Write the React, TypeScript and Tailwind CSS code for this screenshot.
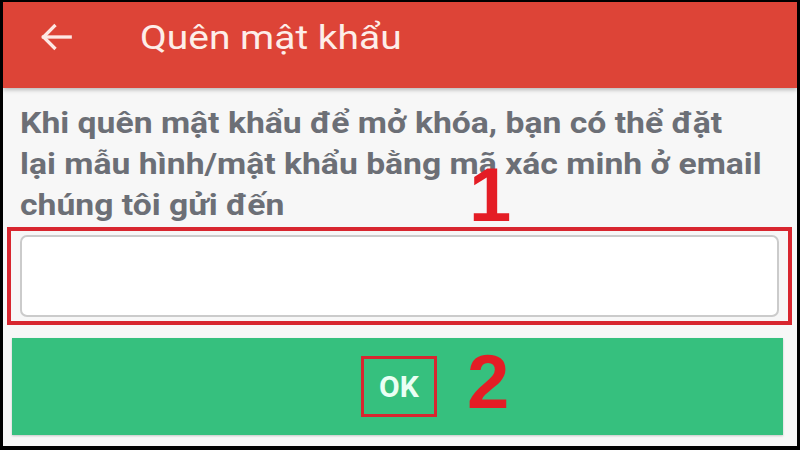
import React from "react";

const font = { fontFamily: "Roboto, 'Noto Sans', sans-serif" };

export default function App() {
  return (
    <div className="w-[800px] h-[450px] bg-black pt-[2px] pb-[4px] px-[3px]" style={font}>
      <div className="relative w-full h-full bg-[#f7f7f7] flex flex-col overflow-hidden">
        {/* header */}
        <div className="h-[86px] shrink-0 bg-[#dd4437] flex items-center pb-[16px] shadow-[0_2px_4px_rgba(0,0,0,0.25)] z-10">
          <svg className="ml-[33px] w-[40px] h-[40px]" viewBox="0 0 24 24" fill="none" stroke="#fde8e4" strokeWidth={2} strokeLinecap="square">
            <path d="M20.5 12H4.5" />
            <path d="M11 5.5l-6.5 6.5 6.5 6.5" />
          </svg>
          <h1 className="ml-[64px] inline-block origin-left scale-x-[1.18] text-[33px] leading-none text-[#fdeee9] font-normal">
            Quên mật khẩu
          </h1>
        </div>

        {/* message */}
        <p className="mt-[14px] ml-[17px] w-[650px] origin-left scale-x-[1.123] text-[30px] leading-[41px] font-bold text-[#6c6f76] whitespace-nowrap">
          Khi quên mật khẩu để mở khóa, bạn có thể đặt
          <br />
          lại mẫu hình/mật khẩu bằng mã xác minh ở email
          <br />
          chúng tôi gửi đến
        </p>

        {/* email input inside annotation frame */}
        <div className="mt-[2px] ml-[4px] w-[785px] h-[98px] border-[4px] border-[#d8262f] px-[9px] py-[4px]">
          <div className="w-full h-full bg-white border-2 border-[#cbcbcb] rounded-[7px]" />
        </div>

        {/* ok button */}
        <div className="mt-[13px] ml-[9px] w-[771px] h-[97px] bg-[#36c07e] flex items-center justify-center shadow-[0_1px_2px_rgba(0,0,0,0.2)]">
          <div className="w-[76px] h-[61px] ml-[3px] border-[3px] border-[#d8262f] flex items-center justify-center">
            <span className="text-[30px] font-bold text-[#eafff4] leading-none">OK</span>
          </div>
        </div>

        {/* annotation numbers */}
        <span
          className="absolute left-[466px] top-[155px] text-[76px] font-bold text-[#e41d25] leading-none"
          style={{ fontFamily: "'Liberation Sans', Arial, sans-serif" }}
        >
          1
        </span>
        <span
          className="absolute left-[464px] top-[342px] text-[76px] font-bold text-[#e41d25] leading-none"
          style={{ fontFamily: "'Liberation Sans', Arial, sans-serif" }}
        >
          2
        </span>
      </div>
    </div>
  );
}
